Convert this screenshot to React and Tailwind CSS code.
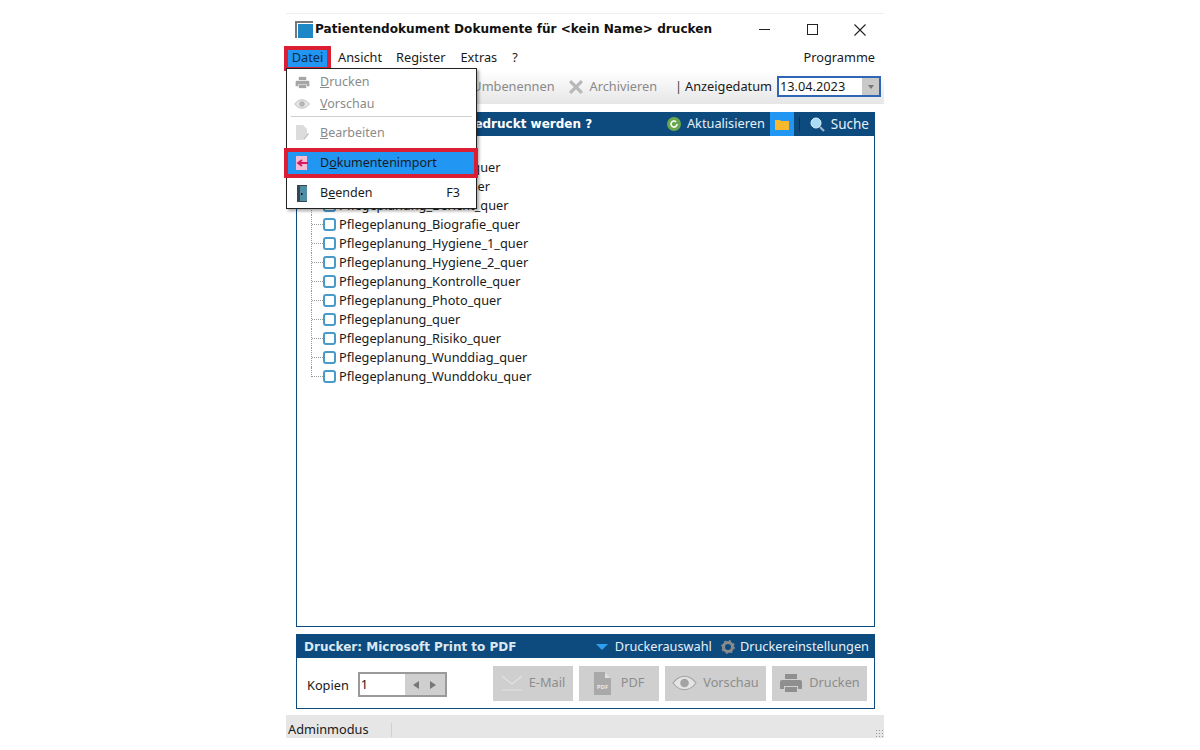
const font = { fontFamily: '"Noto Sans", sans-serif' };
const boldFont = { fontFamily: '"DejaVu Sans", sans-serif' };

const docs = [
  "Pflegeplanung_Akten_quer",
  "Pflegeplanung_ADL_quer",
  "Pflegeplanung_Bericht_quer",
  "Pflegeplanung_Biografie_quer",
  "Pflegeplanung_Hygiene_1_quer",
  "Pflegeplanung_Hygiene_2_quer",
  "Pflegeplanung_Kontrolle_quer",
  "Pflegeplanung_Photo_quer",
  "Pflegeplanung_quer",
  "Pflegeplanung_Risiko_quer",
  "Pflegeplanung_Wunddiag_quer",
  "Pflegeplanung_Wunddoku_quer",
];

const PrinterIcon = ({ size = 16, color = "#8f8f8f" }) => (
  <svg width={size} height={size} viewBox="0 0 24 24" fill={color}>
    <path d="M6 3h12v5H6z" />
    <path d="M3 9h18a2 2 0 0 1 2 2v7h-4v-3H5v3H1v-7a2 2 0 0 1 2-2z" />
    <path d="M6 16h12v5H6z" />
  </svg>
);

const EyeIcon = ({ width = 16, height = 12, color = "#b5b5b5" }) => (
  <svg width={width} height={height} viewBox="0 0 26 16">
    <path d="M1 8c3-4 7-7 12-7s9 3 12 7c-3 4-7 7-12 7S4 12 1 8z" fill="#e4e4e4" stroke={color} strokeWidth="1.2" />
    <circle cx="13" cy="8" r="4.5" fill={color} />
  </svg>
);

const MenuRow = ({ icon, label, under, rest, disabled, shortcut }) => (
  <div className={`flex items-center h-[22px] pl-[7px] pr-[16px] text-[12.5px] ${disabled ? "text-[#8a8a8a]" : "text-[#1a1a1a]"}`}>
    <span className="w-[16px] flex justify-center">{icon}</span>
    <span className="ml-[10px] flex-1">
      {label}
      <span className="underline">{under}</span>
      {rest}
    </span>
    {shortcut && <span>{shortcut}</span>}
  </div>
);

const FileMenu = () => (
  <div className="absolute left-[286px] top-[68px] w-[191px] h-[141px] bg-white border border-[#222] shadow-[2px_2px_3px_rgba(0,0,0,0.35)] z-10 pt-[2px]">
    <MenuRow disabled icon={<PrinterIcon size={15} color="#a5a5a5" />} under="D" rest="rucken" />
    <MenuRow disabled icon={<EyeIcon />} under="V" rest="orschau" />
    <div className="h-px bg-[#cfcfcf] mx-[4px] mt-[1px] mb-[2px]" />
    <div className="h-[3px]" />
    <MenuRow
      disabled
      icon={
        <svg width="14" height="16" viewBox="0 0 14 16">
          <path d="M1 0h7l4 4v5l-5 6H1z" fill="#dcdcdc" />
          <path d="M8 14l5-6 1 1-5 6z" fill="#bdbdbd" />
        </svg>
      }
      under="B"
      rest="earbeiten"
    />
    <div className="h-[8px]" />
    <div className="relative">
      <div className="bg-[#2196f3]">
        <MenuRow
          icon={
            <svg width="14" height="16" viewBox="0 0 14 16">
              <rect x="1" y="1" width="11" height="14" fill="#f6bcd3" />
              <path d="M13 8H4M7 5L3 8l4 3" fill="none" stroke="#d81b60" strokeWidth="1.8" />
            </svg>
          }
          label="D"
          under="o"
          rest="kumentenimport"
        />
      </div>
      <div className="absolute left-[-3px] right-[-2px] top-[-4px] bottom-[-4px] border-[4px] border-[#dc1e32]" />
    </div>
    <div className="h-[8px]" />
    <MenuRow
      icon={
        <svg width="12" height="17" viewBox="0 0 12 17">
          <rect x="1" y="0" width="10" height="17" fill="#37474f" />
          <rect x="4" y="1" width="7" height="15" fill="#4f8ea3" />
          <rect x="5" y="8" width="1.5" height="2" fill="#111" />
        </svg>
      }
      label="B"
      under="e"
      rest="enden"
      shortcut="F3"
    />
  </div>
);

const ActionButton = ({ icon, label, width }) => (
  <div className={`flex items-center justify-center gap-[6px] h-[35px] bg-[#cfcfcf] text-[12.75px] text-[#8d8d8d] ${width}`}>
    {icon}
    <span>{label}</span>
  </div>
);

export default function App() {
  return (
    <div className="relative w-[1200px] h-[750px] bg-white overflow-hidden pt-[13px] pl-[286px]" style={font}>
      <FileMenu />
      <div className="w-[598px] h-[725px] flex flex-col bg-white text-[12.75px] text-[#1a1a1a] border-t border-[#eee]">
        {/* title bar */}
        <div className="h-[31px] flex items-center pl-[9px] shrink-0">
          <div className="relative w-[18px] h-[17px] border-l-2 border-t-2 border-[#777]">
            <div className="absolute left-[1px] top-[1px] right-0 bottom-0 bg-[#1e88c7]" />
          </div>
          <span className="ml-[2px] text-[12.1px] font-bold text-[#111] whitespace-nowrap" style={boldFont}>
            Patientendokument Dokumente für &lt;kein Name&gt; drucken
          </span>
          <div className="ml-auto flex items-center">
            <div className="w-[48px] flex justify-center"><div className="w-[11px] h-px bg-[#222]" /></div>
            <div className="w-[48px] flex justify-center"><div className="w-[11px] h-[11px] border border-[#222]" /></div>
            <div className="w-[48px] flex justify-center">
              <svg width="12" height="12" viewBox="0 0 12 12" stroke="#222" strokeWidth="1.1"><path d="M0.5 0.5l11 11M11.5 0.5l-11 11" /></svg>
            </div>
          </div>
        </div>
        {/* menu bar */}
        <div className="h-[26px] flex items-center pr-[9px] shrink-0">
          <div className="relative h-[25px] w-[47px] -ml-[2px] flex items-center justify-center">
            <div className="absolute inset-0 border-[4px] border-[#dc1e32] bg-[#2196f3]" />
            <span className="relative text-[#0d2a4a]">Datei</span>
          </div>
          <span className="ml-[7px]">Ansicht</span>
          <span className="ml-[14px]">Register</span>
          <span className="ml-[15px]">Extras</span>
          <span className="ml-[15px]">?</span>
          <span className="ml-auto">Programme</span>
        </div>
        {/* toolbar */}
        <div className="h-[33px] flex items-center justify-end pr-[3px] pb-[2px] shrink-0 bg-gradient-to-b from-white to-[#e6e6e6]">
          <span className="text-[#8a8a8a]">Umbenennen</span>
          <svg className="ml-[14px]" width="14" height="14" viewBox="0 0 13 13" stroke="#b8b8b8" strokeWidth="3"><path d="M1 1l11 11M12 1L1 12" /></svg>
          <span className="ml-[7px] text-[#8a8a8a]">Archivieren</span>
          <span className="ml-[18px] text-[#444]">|</span>
          <span className="ml-[3px]">Anzeigedatum</span>
          <div className="ml-[5px] w-[104px] h-[21px] border-2 border-[#2f65b5] flex items-center bg-white">
            <span className="flex-1 pl-[1px]">13.04.2023</span>
            <div className="w-[17px] h-full bg-[#c9c9c9] flex items-center justify-center">
              <div className="w-0 h-0 border-x-[3px] border-x-transparent border-t-[4px] border-t-[#777]" />
            </div>
          </div>
        </div>
        {/* doc panel */}
        <div className="flex-1 flex flex-col pl-[10px] pr-[9px] pt-[8px] pb-[6px] min-h-0">
          <div className="flex-1 flex flex-col border border-[#0d4a7d] min-h-0">
            <div className="h-[24px] -mx-px -mt-px bg-[#0d4a7d] flex items-center pr-[6px] text-white shrink-0">
              <span className="ml-[8px] text-[12px] font-bold whitespace-nowrap" style={boldFont}>Welches Dokument soll gedruckt werden ?</span>
              <div className="ml-auto flex items-center text-[#e6f0f8]">
                <svg width="14" height="14" viewBox="0 0 14 14">
                  <circle cx="7" cy="7" r="7" fill="#6aa84f" />
                  <path d="M10 7a3 3 0 1 1-1-2.2" fill="none" stroke="#fff" strokeWidth="1.6" />
                </svg>
                <span className="ml-[6px]">Aktualisieren</span>
                <div className="ml-[5px] w-[24px] h-[24px] bg-[#2196f3] flex items-center justify-center">
                  <svg width="14" height="11" viewBox="0 0 14 11"><path d="M0 1h5l1 1h8v9H0z" fill="#f5b82e" /></svg>
                </div>
                <div className="ml-[5px] w-px h-[14px] bg-[#06304f]" />
                <svg className="ml-[10px]" width="15" height="15" viewBox="0 0 15 15">
                  <circle cx="6" cy="6" r="5" fill="#a8dcf5" stroke="#dff3fc" />
                  <path d="M10 10l4 4" stroke="#9fb8c8" strokeWidth="2.2" />
                </svg>
                <span className="ml-[6px] text-[13.5px]">Suche</span>
              </div>
            </div>
            <div className="flex-1 pt-[22px] pl-[14px] bg-white">
              {docs.map((d, i) => (
                <div key={d} className="h-[19px] flex items-center">
                  <div className={`w-0 self-start border-l border-dotted border-[#999] ${i === docs.length - 1 ? "h-[10px]" : "h-[19px]"}`} />
                  <div className="w-[11px] h-0 border-t border-dotted border-[#999]" />
                  <div className="w-[13px] h-[13px] border-2 border-[#4a9ac9] rounded-[3px] bg-white" />
                  <span className="ml-[3px] whitespace-nowrap leading-none">{d}</span>
                </div>
              ))}
            </div>
          </div>
          {/* printer panel */}
          <div className="mt-[7px] h-[75px] shrink-0 flex flex-col border border-[#0d4a7d]">
            <div className="h-[24px] -mx-px -mt-px bg-[#0d4a7d] flex items-center pr-[6px] pt-[1px] text-white shrink-0">
              <span className="ml-[8px] text-[12px] font-bold text-[#dce8f2]" style={boldFont}>Drucker: Microsoft Print to PDF</span>
              <div className="ml-auto flex items-center text-[#e6f0f8]">
                <div className="w-0 h-0 border-x-[6px] border-x-transparent border-t-[6px] border-t-[#2f9df0]" />
                <span className="ml-[7px]">Druckerauswahl</span>
                <svg className="ml-[9px]" width="14" height="14" viewBox="0 0 14 14">
                  <circle cx="7" cy="7" r="4.5" fill="none" stroke="#8b8b8b" strokeWidth="3" />
                  <circle cx="7" cy="7" r="6.2" fill="none" stroke="#8b8b8b" strokeWidth="1.5" strokeDasharray="2 2.9" />
                </svg>
                <span className="ml-[5px]">Druckereinstellungen</span>
              </div>
            </div>
            <div className="flex-1 flex items-center pl-[10px] pr-[7px] pt-[3px]">
              <span className="pt-[3px]">Kopien</span>
              <div className="ml-[9px] w-[89px] h-[25px] border-2 border-[#9a9a9a] flex items-center">
                <span className="flex-1 pl-[1px] pt-[1px]">1</span>
                <div className="w-[40px] h-full bg-[#cfcfcf] flex items-center justify-center gap-[11px]">
                  <div className="w-0 h-0 border-y-[4px] border-y-transparent border-r-[6px] border-r-[#777]" />
                  <div className="w-0 h-0 border-y-[4px] border-y-transparent border-l-[6px] border-l-[#777]" />
                </div>
              </div>
              <div className="ml-auto flex gap-[6px] -mt-[3px]">
                <ActionButton
                  width="w-[80px]"
                  label="E-Mail"
                  icon={
                    <svg width="22" height="16" viewBox="0 0 22 16" fill="none" stroke="#e2e2e2" strokeWidth="1.2"><path d="M1 1l10 8 10-8M1 15h20" /></svg>
                  }
                />
                <ActionButton
                  width="w-[80px]"
                  label="PDF"
                  icon={
                    <svg className="mr-[4px]" width="17" height="23" viewBox="0 0 17 23">
                      <path d="M0 0h11l6 6v17H0z" fill="#a9a9a9" />
                      <path d="M11 0l6 6h-6z" fill="#dedede" />
                      <text x="8.5" y="17" textAnchor="middle" fontSize="6" fontWeight="bold" fill="#e8e8e8">PDF</text>
                    </svg>
                  }
                />
                <ActionButton width="w-[101px]" label="Vorschau" icon={<EyeIcon width={25} height={16} color="#a3a3a3" />} />
                <ActionButton width="w-[95px]" label="Drucken" icon={<PrinterIcon size={24} color="#8f8f8f" />} />
              </div>
            </div>
          </div>
        </div>
        {/* status bar */}
        <div className="h-[23px] shrink-0 bg-[#e6e6e6] flex items-center pl-[2px] pt-[7px] relative">
          <span>Adminmodus</span>
          <div className="ml-[22px] w-px h-[14px] bg-[#d0d0d0]" />
          <div className="absolute right-[1px] bottom-[1px] w-[8px] h-[8px] bg-[radial-gradient(#999_1px,transparent_1px)] bg-[length:3px_3px]" />
        </div>
      </div>
    </div>
  );
}
